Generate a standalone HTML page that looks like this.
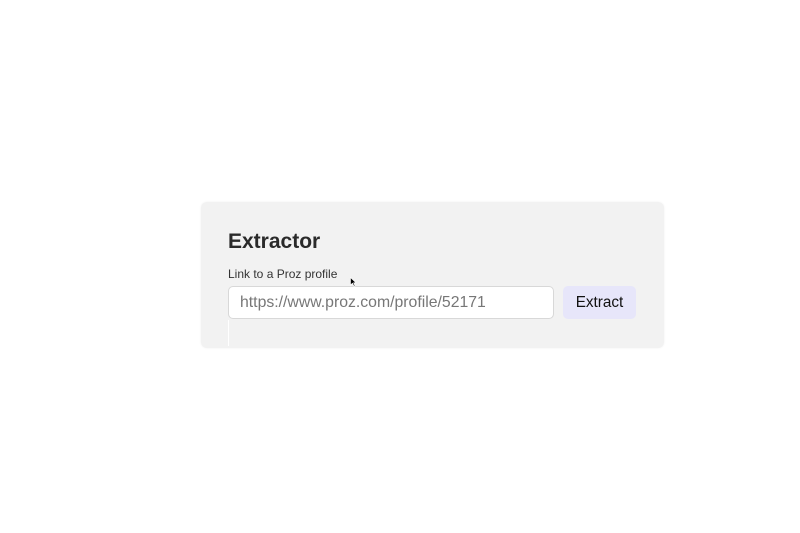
<!DOCTYPE html>
<html><head><style>
body{margin:0;width:800px;height:533px;background:#fff;font-family:"Liberation Sans",Arial,sans-serif;position:relative;overflow:hidden}
.card{position:absolute;left:201px;top:202px;width:463px;height:146px;background:#f2f2f2;border-radius:6px;box-shadow:0 0 2px rgba(0,0,0,0.06)}
.vl{position:absolute;left:228px;top:320px;width:1px;height:26px;background:#fff}
h1{position:absolute;left:228px;top:230px;margin:0;font-size:21px;font-weight:bold;color:#2a2a2a}
.lab{position:absolute;left:228px;top:267px;font-size:12px;color:#333}
.inp{position:absolute;left:228px;top:286px;width:326px;height:33px;background:#fff;border:1px solid #d8d8d8;border-radius:5px;box-sizing:border-box;font-size:15.8px;color:#777;line-height:31px;padding-left:11px}
.btn{position:absolute;left:563px;top:286px;width:73px;height:33px;background:#e7e6fa;border-radius:5px;font-size:15.3px;color:#111;line-height:33px;text-align:center}
</style></head><body>
<div class="card"></div>
<div class="vl"></div>
<h1>Extractor</h1>
<div class="lab">Link to a Proz profile</div>
<div class="inp">https://www.proz.com/profile/52171</div>
<div class="btn">Extract</div>
<svg style="position:absolute;left:350px;top:277px" width="7" height="10" viewBox="0 0 7 10"><path d="M0.5 0.5 L0.5 8 L2.5 6.2 L4 9.3 L5 8.8 L3.6 5.8 L6 5.8 Z" fill="#000" stroke="#fff" stroke-width="0.6"/></svg>
</body></html>
